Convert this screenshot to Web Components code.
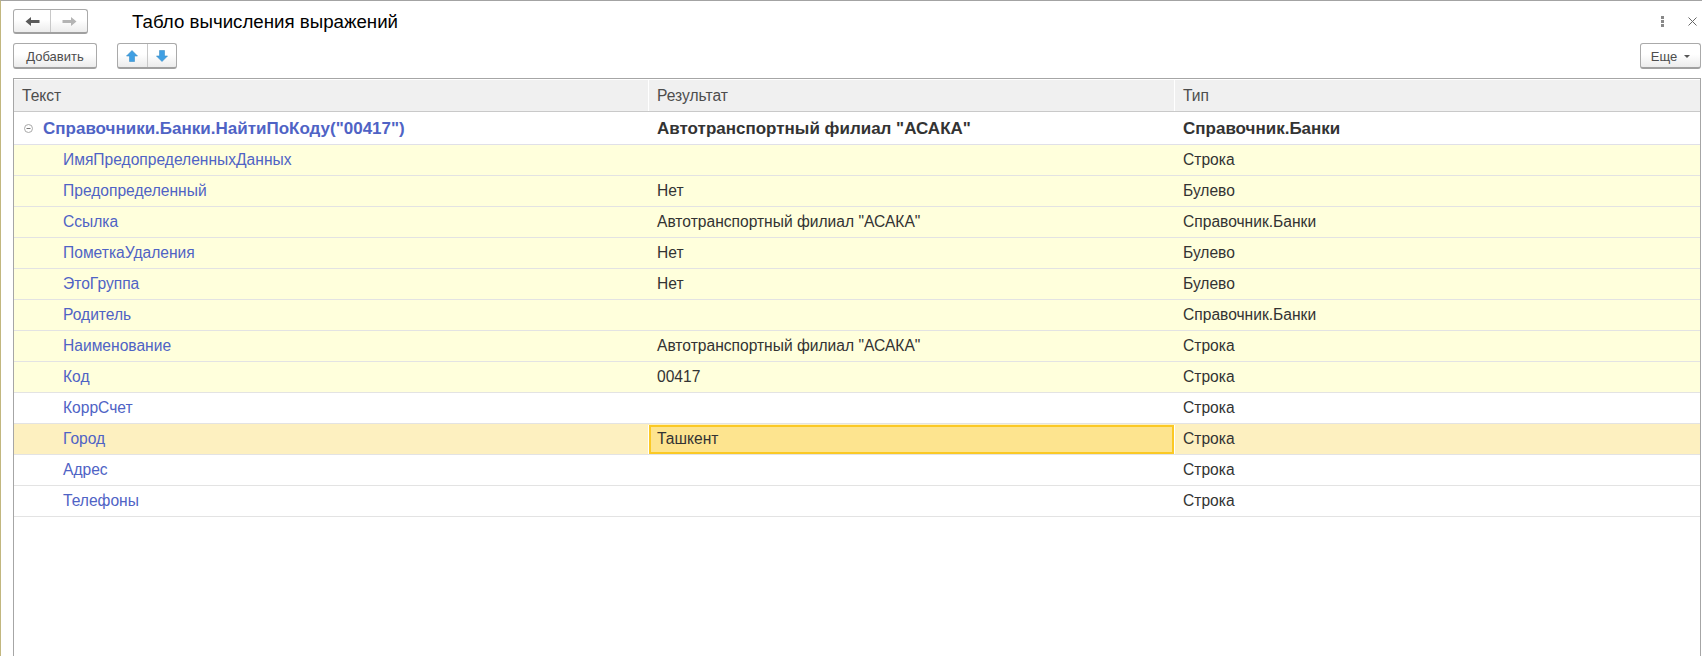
<!DOCTYPE html>
<html lang="ru">
<head>
<meta charset="utf-8">
<title>Табло вычисления выражений</title>
<style>
    html, body { margin: 0; height: 100%; background: #fff; overflow: hidden; }
    body { font: 15.6px "Liberation Sans", Arial, sans-serif; color: #333; }
</style>
</head>
<body>
<calc-form></calc-form>

<script>
// Shared look of the grey toolbar buttons.
const buttonCss = `
    .btn {
        box-sizing: border-box;
        display: flex;
        align-items: center;
        justify-content: center;
        border: 1px solid #aaa;
        border-bottom: 2px solid #a0a0a0;
        border-radius: 3px;
        background: linear-gradient(#fff 0%, #fff 45%, #ececec 100%);
        color: #4d4d4d;
    }
`;

// A plain toolbar button with a text label.
class ToolButton extends HTMLElement {
    constructor() {
        super();
        const shadow = this.attachShadow({ mode: 'open' });
        shadow.innerHTML = `
<style>
    ${buttonCss}
    :host { display: block; }
    .btn { height: 26px; width: var(--w, 84px); font-size: 13px; padding-top: 1px; gap: 7px; }
</style>
<div class="btn"><slot></slot></div>`;
    }
}

// Two icon buttons glued together; the icons come through slots.
class ButtonPair extends HTMLElement {
    constructor() {
        super();
        const shadow = this.attachShadow({ mode: 'open' });
        shadow.innerHTML = `
<style>
    ${buttonCss}
    :host { display: block; }
    .btn { height: var(--h, 26px); width: var(--w, 60px); justify-content: stretch; }
    .half { flex: 1; height: 100%; display: flex; align-items: center; justify-content: center; }
    .half + .half { border-left: 1px solid #c8c8c8; }
</style>
<div class="btn">
    <div class="half"><slot name="first"></slot></div>
    <div class="half"><slot name="second"></slot></div>
</div>`;
    }
}

// Grid header with its three columns.
class GridHead extends HTMLElement {
    constructor() {
        super();
        const shadow = this.attachShadow({ mode: 'open' });
        shadow.innerHTML = `
<style>
    :host {
        display: grid;
        grid-template-columns: 635px 526px 1fr;
        height: 31px;
        background: #f0f0f0;
        border-bottom: 1px solid #c9c9c9;
        border-top: 1px solid #fff;
        color: #4d4d4d;
    }
    div { display: flex; align-items: center; padding-left: 8px; box-sizing: border-box; border-right: 1px solid #fff; }
    div:last-child { border-right: 0; }
</style>
<div>Текст</div><div>Результат</div><div>Тип</div>`;
    }
}

// One grid row. Attributes: name, result, type, tone (plain/yellow/current), root.
class GridRow extends HTMLElement {
    constructor() {
        super();
        const shadow = this.attachShadow({ mode: 'open' });
        const root = this.hasAttribute('root');
        shadow.innerHTML = `
<style>
    :host {
        display: grid;
        grid-template-columns: 635px 526px 1fr;
        height: 30px;
        border-bottom: 1px solid #e3e3e3;
        color: #333;
    }
    :host([tone="yellow"]) { background: #ffffdc; }
    :host([tone="current"]) { background: #fdf0c0; }
    :host([root]) { height: 32px; font-weight: bold; font-size: 17px; border-bottom-color: #e0e0e8; }
    .cell { display: flex; align-items: center; padding: ${root ? 1 : 0}px 0 0 8px; box-sizing: border-box; white-space: nowrap; }
    .name { color: #4f63c5; padding-left: ${root ? 9 : 49}px; }
    .toggle { width: 11px; height: 11px; margin-right: 9px; flex: none; }
    .active {
        background: #fde48f;
        border: 2px solid #fbc925;
        padding: 0 0 1px 6px;
        margin: 1px 1px 0 0;
        box-shadow: 1px 0 #fff, -1px 0 #fff;
    }
</style>
<div class="cell name">${root ? `<svg class="toggle" viewBox="0 0 11 11"><circle cx="5.5" cy="5.5" r="4" fill="#fff" stroke="#a9a9a9"/><path d="M3.5 5.5h4" stroke="#777"/></svg>` : ''}<span>${this.getAttribute('name')}</span></div>
<div class="cell ${this.hasAttribute('active') ? 'active' : ''}"><span>${this.getAttribute('result') || ''}</span></div>
<div class="cell"><span>${this.getAttribute('type')}</span></div>`;
    }
}

// The whole form: title bar, command bar and the grid.
class CalcForm extends HTMLElement {
    constructor() {
        super();
        const shadow = this.attachShadow({ mode: 'open' });
        shadow.innerHTML = `
<style>
    :host {
        display: flex;
        flex-direction: column;
        box-sizing: border-box;
        height: 656px;
        border-top: 1px solid #a3a3a3;
        border-left: 1px solid #c2b77f;
        padding: 8px 1px 0 12px;
    }
    .title-bar { display: flex; align-items: center; height: 25px; }
    h1 { margin: 0 0 0 44px; font-size: 18.7px; font-weight: normal; color: #000; }
    .spacer { flex: 1; }
    .more { width: 5px; margin-right: 23px; display: block; }
    .close { width: 9px; margin-right: 4px; display: block; }
    .command-bar { display: flex; align-items: center; margin-top: 9px; }
    .up-down { margin-left: 20px; }
    .grid { flex: 1; margin-top: 9px; border: 1px solid #a6a6a6; border-bottom: 0; }
    tool-button.more-btn { --w: 61px; }
    .caret { width: 6px; height: 3px; display: block; }
</style>
<div class="title-bar">
    <button-pair style="--w:75px;--h:25px">
        <svg slot="first" width="15" height="11" viewBox="0 0 15 11"><path d="M0.5 5.5 6 1v3h8.5v3H6v3z" fill="#5a5a5a"/></svg>
        <svg slot="second" width="15" height="11" viewBox="0 0 15 11"><path d="M14.5 5.5 9 1v3H.5v3H9v3z" fill="#b4b4b4"/></svg>
    </button-pair>
    <h1>Табло вычисления выражений</h1>
    <div class="spacer"></div>
    <svg class="more" viewBox="0 0 5 11" height="11"><g fill="#888"><rect x="1" y="0" width="3" height="3"/><rect x="1" y="4" width="3" height="3"/><rect x="1" y="8" width="3" height="3"/></g></svg>
    <svg class="close" viewBox="0 0 9 9" height="9"><path d="M.5.5l8 8M8.5.5l-8 8" stroke="#666" fill="none"/></svg>
</div>
<div class="command-bar">
    <tool-button>Добавить</tool-button>
    <button-pair class="up-down">
        <svg slot="first" width="12" height="12" viewBox="0 0 12 12"><path d="M6 .5 11.5 6H8.5v5.5h-5V6H.5z" fill="#3f9fe3" stroke="#3a8fc8" stroke-width=".6"/></svg>
        <svg slot="second" width="12" height="12" viewBox="0 0 12 12"><path d="M6 11.5 11.5 6H8.5V.5h-5V6H.5z" fill="#3f9fe3" stroke="#3a8fc8" stroke-width=".6"/></svg>
    </button-pair>
    <div class="spacer"></div>
    <tool-button class="more-btn">Еще<svg class="caret" viewBox="0 0 6 3"><path d="M0 0h6L3 3z" fill="#555"/></svg></tool-button>
</div>
<div class="grid">
    <grid-head></grid-head>
    <grid-row root name='Справочники.Банки.НайтиПоКоду("00417")' result='Автотранспортный филиал "АСАКА"' type="Справочник.Банки"></grid-row>
    <grid-row tone="yellow" name="ИмяПредопределенныхДанных" type="Строка"></grid-row>
    <grid-row tone="yellow" name="Предопределенный" result="Нет" type="Булево"></grid-row>
    <grid-row tone="yellow" name="Ссылка" result='Автотранспортный филиал "АСАКА"' type="Справочник.Банки"></grid-row>
    <grid-row tone="yellow" name="ПометкаУдаления" result="Нет" type="Булево"></grid-row>
    <grid-row tone="yellow" name="ЭтоГруппа" result="Нет" type="Булево"></grid-row>
    <grid-row tone="yellow" name="Родитель" type="Справочник.Банки"></grid-row>
    <grid-row tone="yellow" name="Наименование" result='Автотранспортный филиал "АСАКА"' type="Строка"></grid-row>
    <grid-row tone="yellow" name="Код" result="00417" type="Строка"></grid-row>
    <grid-row name="КоррСчет" type="Строка"></grid-row>
    <grid-row tone="current" active name="Город" result="Ташкент" type="Строка"></grid-row>
    <grid-row name="Адрес" type="Строка"></grid-row>
    <grid-row name="Телефоны" type="Строка"></grid-row>
</div>`;
    }
}

window.customElements.define('tool-button', ToolButton);
window.customElements.define('button-pair', ButtonPair);
window.customElements.define('grid-head', GridHead);
window.customElements.define('grid-row', GridRow);
window.customElements.define('calc-form', CalcForm);
</script>
</body>
</html>
